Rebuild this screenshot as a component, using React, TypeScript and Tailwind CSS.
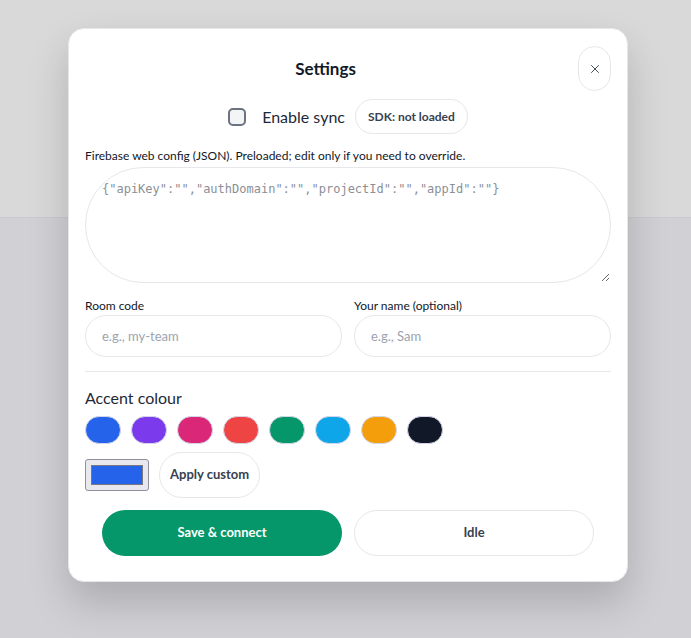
import { X } from 'lucide-react';

const swatches = ['#2563eb', '#7c3aed', '#db2777', '#ef4444', '#059669', '#0ea5e9', '#f59e0b', '#111827'];

export default function App() {
	return (
		<div className="relative h-[638px] w-[691px] overflow-hidden bg-[#d1d1d5] font-['Lato','Noto_Sans',sans-serif] text-[#111827]">
			<div className="h-[218px] border-b border-[#cbcbcf] bg-[#d9d9d9]" />
			<div className="absolute left-[68px] top-[28px] w-[560px] rounded-2xl border border-[#e5e7eb] bg-white px-4 pt-[17px] pb-[25px] shadow-[0_20px_40px_rgba(0,0,0,0.18)]">
				<div className="flex items-center gap-3">
					<h2 className="flex-1 text-center text-[17px] font-bold">Settings</h2>
					<button className="flex h-[45px] w-[33px] items-center justify-center rounded-full border border-[#e5e7eb] bg-white text-[#374151]">
						<X size={14} strokeWidth={1.6} />
					</button>
				</div>
				<div className="mt-2 flex items-center justify-center gap-[10px]">
					<label className="flex items-center gap-4 text-[16px] text-[#1f2937]">
						<span className="h-[18px] w-[18px] rounded-[5px] border-2 border-[#6b7280] bg-[#f3f4f6]" />
						Enable sync
					</label>
					<span className="flex h-[35px] items-center rounded-full border border-[#e5e7eb] px-[12px] text-[12px] font-bold text-[#374151]">SDK: not loaded</span>
				</div>
				<p className="mt-[14px] text-[12px] leading-4 text-[#111827]">Firebase web config (JSON). Preloaded; edit only if you need to override.</p>
				<textarea
					className="mt-[3px] block h-[116px] w-full rounded-full border border-[#e5e7eb] px-4 py-[12px] font-['DejaVu_Sans_Mono','Liberation_Mono',monospace] text-[12px] outline-none placeholder:text-[#8b8f96]"
					placeholder={'{"apiKey":"","authDomain":"","projectId":"","appId":""}'}
				/>
				<div className="mt-[15px] grid grid-cols-2 gap-3">
					<div>
						<div className="text-[12px] leading-4">Room code</div>
						<input className="mt-[1px] h-[42px] w-full rounded-full border border-[#e5e7eb] px-4 text-[13px] outline-none placeholder:text-[#9ca3af]" placeholder="e.g., my-team" />
					</div>
					<div>
						<div className="text-[12px] leading-4">Your name (optional)</div>
						<input className="mt-[1px] h-[42px] w-full rounded-full border border-[#e5e7eb] px-4 text-[13px] outline-none placeholder:text-[#9ca3af]" placeholder="e.g., Sam" />
					</div>
				</div>
				<hr className="mt-[14px] border-[#e5e7eb]" />
				<div className="mt-[16px] text-[16px] leading-5 text-[#1f2937]">Accent colour</div>
				<div className="mt-[8px] flex gap-[10px]">
					{swatches.map((c) => (
						<button key={c} className="h-[28px] w-[36px] rounded-full border border-[#d4d6e8]" style={{ backgroundColor: c }} />
					))}
				</div>
				<div className="mt-2 flex items-center gap-[10px]">
					<div className="flex h-[32px] w-[64px] items-center justify-center rounded-[3px] border border-[#8f8f9d] bg-[#e9e9ed]">
						<div className="h-[20px] w-[52px] border border-[#77777f] bg-[#2563eb]" />
					</div>
					<button className="h-[46px] rounded-full border border-[#e5e7eb] px-[10px] text-[13px] font-bold text-[#374151]">Apply custom</button>
				</div>
				<div className="mt-3 grid grid-cols-2 gap-3 px-[17px]">
					<button className="h-[46px] rounded-full bg-[#059669] text-[13px] font-bold text-white">Save &amp; connect</button>
					<button className="h-[46px] rounded-full border border-[#e5e7eb] bg-white text-[13px] font-bold text-[#374151]">Idle</button>
				</div>
			</div>
		</div>
	);
}
